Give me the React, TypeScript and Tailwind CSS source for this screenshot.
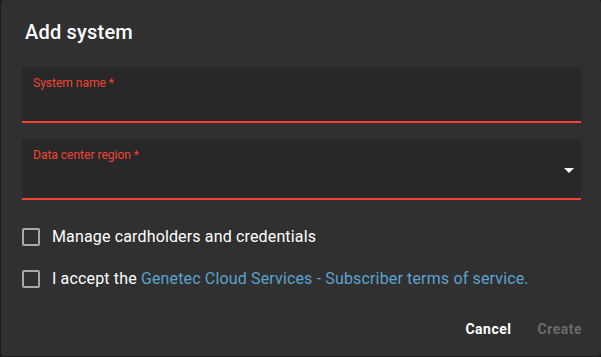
import React, { useState } from 'react';

const font = { fontFamily: 'Roboto, "Liberation Sans", sans-serif' };

const Checkbox: React.FC<{ checked: boolean; onChange: () => void; children: React.ReactNode }> = ({ checked, onChange, children }) => (
    <label className="flex items-center h-6 cursor-pointer select-none">
        <span
            onClick={onChange}
            className={`w-[18px] h-[18px] mr-[12px] rounded-[2px] border-2 ${checked ? 'border-[#5ba3cf] bg-[#5ba3cf]' : 'border-[#a8a8a8]'}`}
        />
        <span className="text-[16px] leading-6 tracking-[0.15px] text-white">{children}</span>
    </label>
);

const App: React.FC = () => {
    const [manage, setManage] = useState(false);
    const [accept, setAccept] = useState(false);

    return (
        <div className="w-[601px] h-[357px] bg-[#1c1c1c]" style={font}>
            <div className="ml-px w-[600px] h-[356px] bg-[#303030] rounded-[4px] flex flex-col pl-[21px] pr-[20px]">
                <h2 className="mt-[18px] ml-[3px] text-[20px] leading-7 font-medium tracking-[0.2px] text-white">Add system</h2>

                <div className="mt-[21px] h-[56px] bg-[#282828] rounded-t-[4px] border-b-2 border-[#f44336] px-[11px] pt-2">
                    <div className="text-[12px] leading-4 text-[#f44336]">System name *</div>
                </div>

                <div className="mt-[16px] h-[61px] bg-[#282828] rounded-t-[4px] border-b-2 border-[#f44336] pl-[11px] pr-[7px] pt-2 flex justify-between">
                    <div className="text-[12px] leading-4 text-[#f44336]">Data center region *</div>
                    <svg width="10" height="5" viewBox="0 0 10 5" className="mt-[21px]">
                        <path d="M0 0 L10 0 L5 5 Z" fill="#ffffff" />
                    </svg>
                </div>

                <div className="mt-[25px] flex flex-col gap-[18px]">
                    <Checkbox checked={manage} onChange={() => setManage(!manage)}>
                        Manage cardholders and credentials
                    </Checkbox>
                    <Checkbox checked={accept} onChange={() => setAccept(!accept)}>
                        I accept the <span className="text-[#5ba3cf]">Genetec Cloud Services - Subscriber terms of service.</span>
                    </Checkbox>
                </div>

                <div className="mt-auto mb-[9px] mr-[-9px] flex justify-end gap-[10px]">
                    <button className="h-9 px-2 text-[14px] font-bold tracking-[0.5px] text-white">Cancel</button>
                    <button className="h-9 px-2 text-[14px] font-bold tracking-[0.5px] text-[#6a6a6a]" disabled>Create</button>
                </div>
            </div>
        </div>
    );
};

export default App;
